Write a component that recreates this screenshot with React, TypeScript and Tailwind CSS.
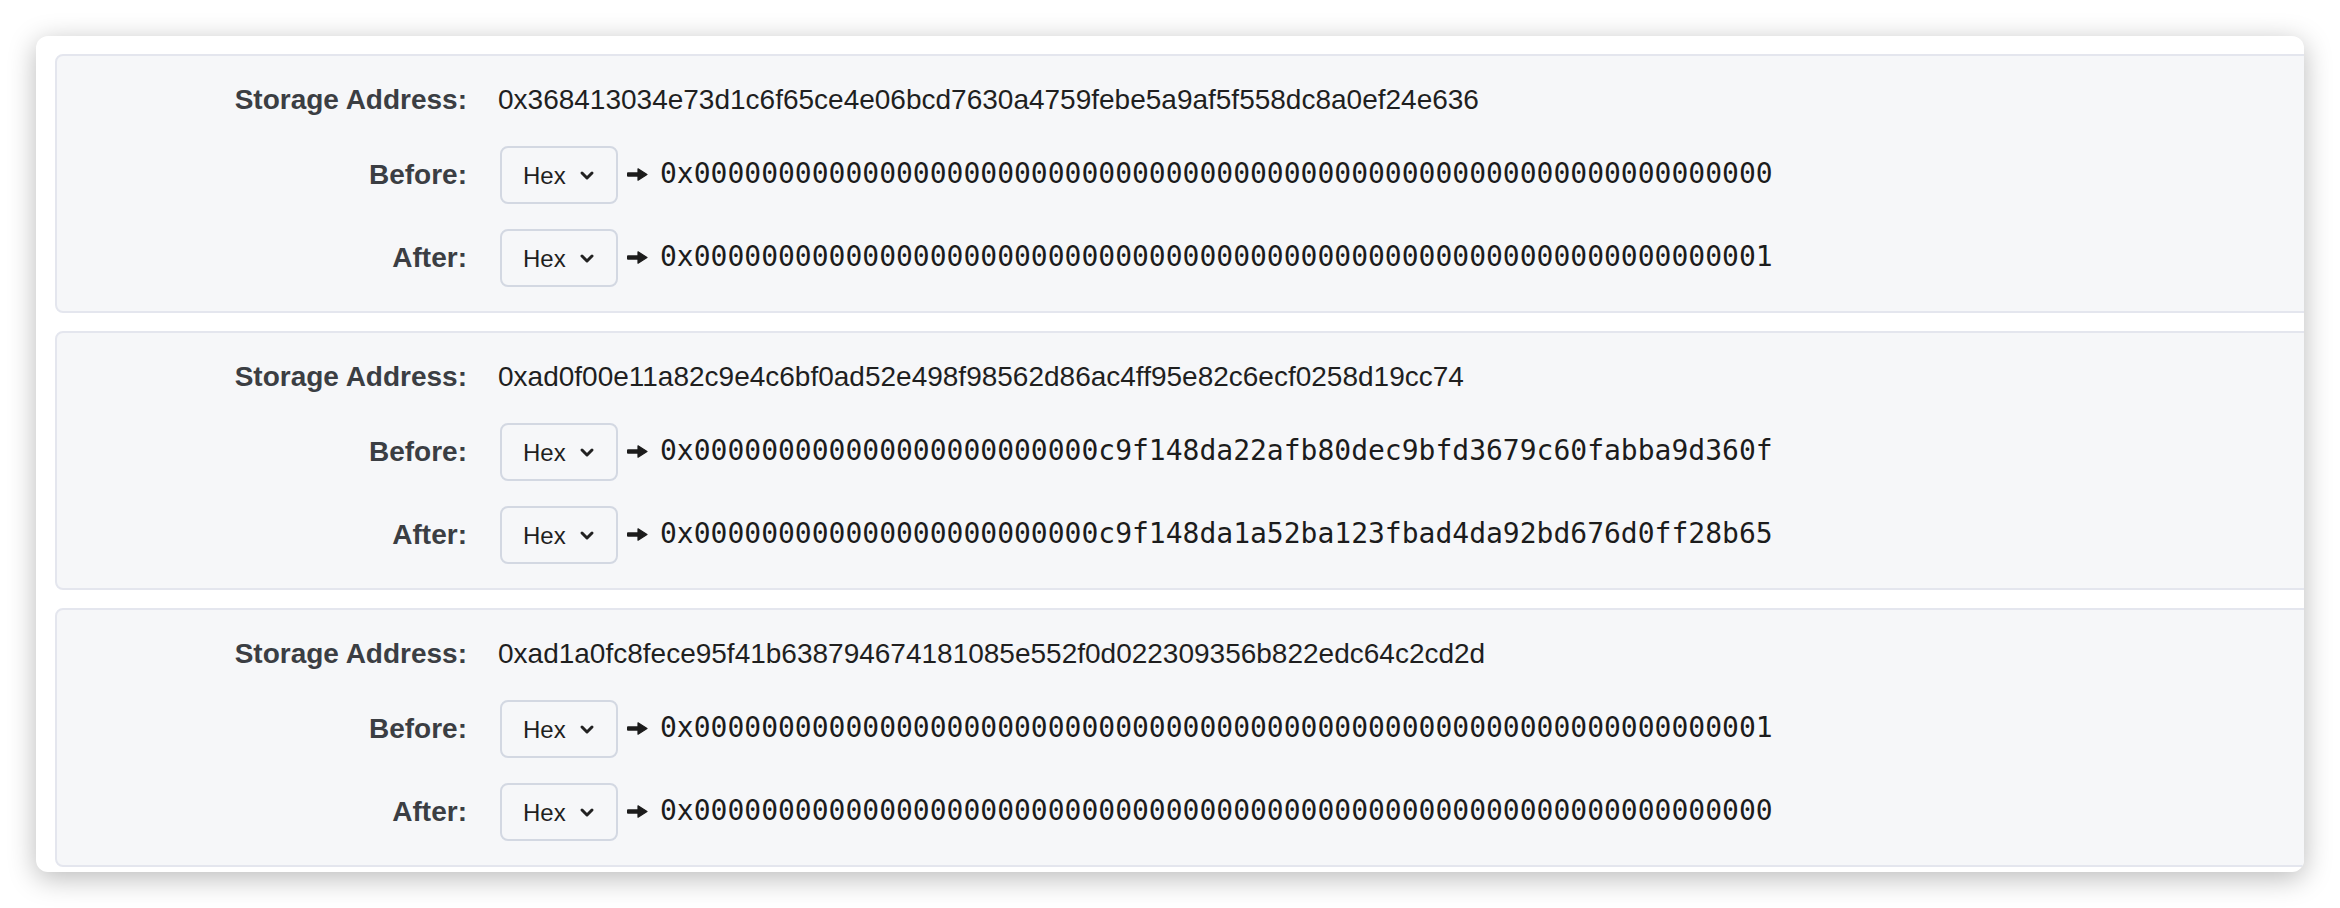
import React from "react";

type Change = {
  address: string;
  before: string;
  after: string;
};

const zeros = (n: number) => "0".repeat(n);

const changes: Change[] = [
  {
    address: "0x368413034e73d1c6f65ce4e06bcd7630a4759febe5a9af5f558dc8a0ef24e636",
    before: "0x" + zeros(64),
    after: "0x" + zeros(63) + "1",
  },
  {
    address: "0xad0f00e11a82c9e4c6bf0ad52e498f98562d86ac4ff95e82c6ecf0258d19cc74",
    before: "0x" + zeros(24) + "c9f148da22afb80dec9bfd3679c60fabba9d360f",
    after: "0x" + zeros(24) + "c9f148da1a52ba123fbad4da92bd676d0ff28b65",
  },
  {
    address: "0xad1a0fc8fece95f41b638794674181085e552f0d022309356b822edc64c2cd2d",
    before: "0x" + zeros(63) + "1",
    after: "0x" + zeros(64),
  },
];

const sans = "font-['Liberation_Sans',Arial,sans-serif]";
const mono = "font-['DejaVu_Sans_Mono','Liberation_Mono',monospace]";

const Arrow = () => (
  <svg width="21" height="13" viewBox="0 0 21 13" className="shrink-0 text-[#1c1c1c]" fill="currentColor">
    <rect x="0" y="4.3" width="12" height="4.4" rx="1" />
    <path d="M11 0.8 L20 6.5 L11 12.2 Z" strokeLinejoin="round" stroke="currentColor" strokeWidth="1.2" />
  </svg>
);

const Chevron = () => (
  <svg width="16" height="11" viewBox="0 0 16 11" fill="none" className="text-[#222]">
    <path d="M3 3 L8 8 L13 3" stroke="currentColor" strokeWidth="3" strokeLinecap="round" strokeLinejoin="round" />
  </svg>
);

const HexSelect = () => (
  <div className="flex h-[58px] w-[118px] shrink-0 items-center justify-between rounded-[8px] border-2 border-[#d3d8e2] bg-[#f6f7f9] pl-[21px] pr-[21px]">
    <span className={sans + " pt-[2px] text-[24px] text-[#1f1f1f]"}>Hex</span>
    <Chevron />
  </div>
);

const Label = ({ children }: { children: React.ReactNode }) => (
  <div className={sans + " w-[410px] shrink-0 text-right text-[28px] font-bold text-[#3b3e43]"}>{children}</div>
);

const ValueRow = ({ label, value }: { label: string; value: string }) => (
  <div className="flex h-[58px] items-center">
    <Label>{label}</Label>
    <div className="ml-[33px] flex items-center">
      <HexSelect />
      <div className="ml-[9px] mb-[2px]">
        <Arrow />
      </div>
      <span className={mono + " ml-[12px] mb-[3px] whitespace-nowrap text-[28px] leading-none text-[#1c1c1c]"}>
        {value}
      </span>
    </div>
  </div>
);

const ChangePanel = ({ change }: { change: Change }) => (
  <div className="flex w-[2300px] shrink-0 flex-col gap-[25px] rounded-[8px] border-2 border-[#e4e6ee] bg-[#f6f7f9] pt-[23px] pb-[24px]">
    <div className="flex h-[42px] items-center">
      <Label>Storage Address:</Label>
      <span className={sans + " ml-[31px] whitespace-nowrap text-[28px] text-[#1f1f1f]"}>{change.address}</span>
    </div>
    <ValueRow label="Before:" value={change.before} />
    <ValueRow label="After:" value={change.after} />
  </div>
);

export default function App() {
  return (
    <div className="min-h-[908px] w-[2340px] bg-white pt-[36px] pl-[36px]">
      <div className="flex h-[836px] w-[2268px] flex-col gap-[18px] overflow-hidden rounded-[12px] bg-white pt-[18px] pl-[19px] shadow-[0_6px_28px_rgba(0,0,0,0.28)]">
        {changes.map((c) => (
          <ChangePanel key={c.address} change={c} />
        ))}
      </div>
    </div>
  );
}
